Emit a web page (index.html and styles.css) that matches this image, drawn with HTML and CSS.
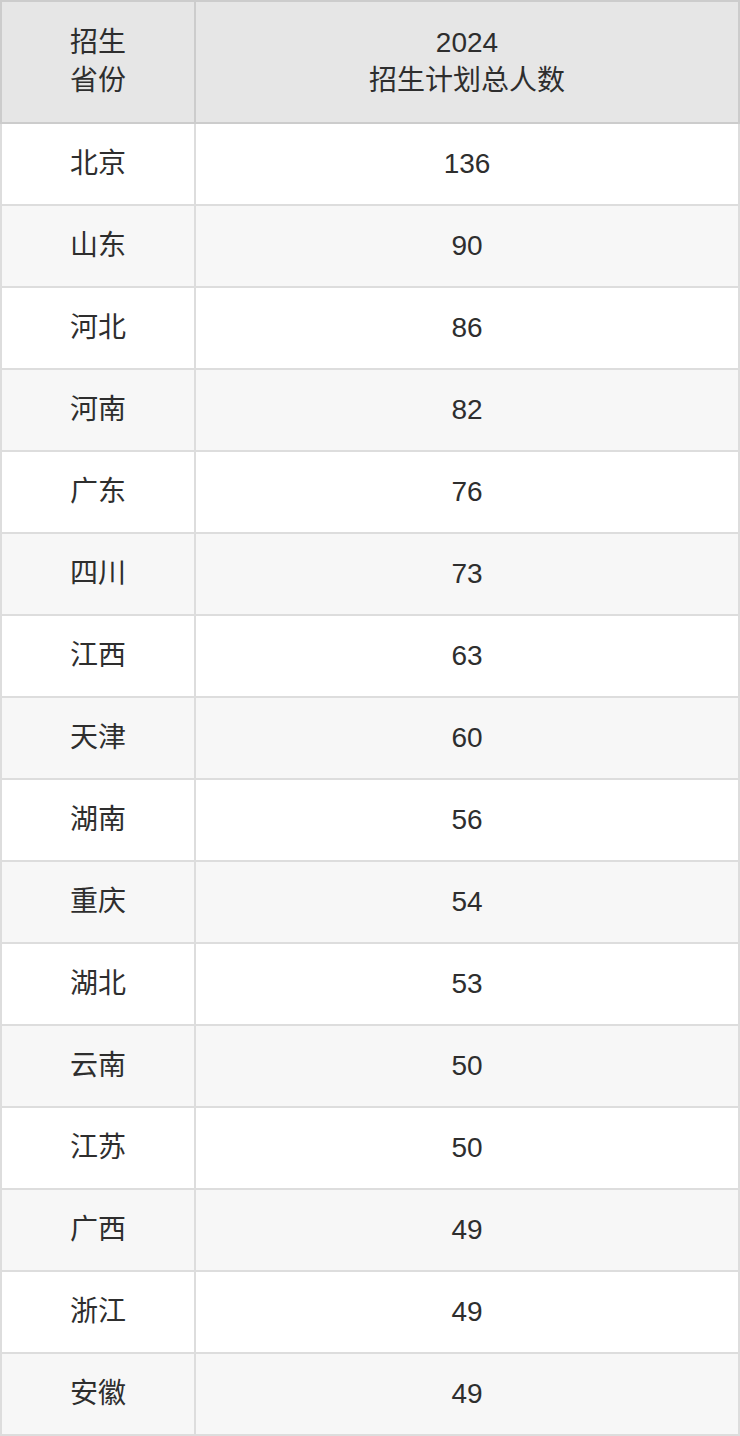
FILE: index.html
```html
<!DOCTYPE html>
<html lang="zh-CN">
<head>
<meta charset="utf-8">
<title>招生计划</title>
<link rel="stylesheet" href="styles.css">
</head>
<body>
<table class="plan">
  <thead>
    <tr><th class="c1">招生<br>省份</th><th class="c2">2024<br>招生计划总人数</th></tr>
  </thead>
  <tbody>
    <tr><td class="c1">北京</td><td class="c2">136</td></tr>
    <tr><td class="c1">山东</td><td class="c2">90</td></tr>
    <tr><td class="c1">河北</td><td class="c2">86</td></tr>
    <tr><td class="c1">河南</td><td class="c2">82</td></tr>
    <tr><td class="c1">广东</td><td class="c2">76</td></tr>
    <tr><td class="c1">四川</td><td class="c2">73</td></tr>
    <tr><td class="c1">江西</td><td class="c2">63</td></tr>
    <tr><td class="c1">天津</td><td class="c2">60</td></tr>
    <tr><td class="c1">湖南</td><td class="c2">56</td></tr>
    <tr><td class="c1">重庆</td><td class="c2">54</td></tr>
    <tr><td class="c1">湖北</td><td class="c2">53</td></tr>
    <tr><td class="c1">云南</td><td class="c2">50</td></tr>
    <tr><td class="c1">江苏</td><td class="c2">50</td></tr>
    <tr><td class="c1">广西</td><td class="c2">49</td></tr>
    <tr><td class="c1">浙江</td><td class="c2">49</td></tr>
    <tr><td class="c1">安徽</td><td class="c2">49</td></tr>
  </tbody>
</table>
</body>
</html>
```

FILE: styles.css
```css
html, body {
  margin: 0;
  padding: 0;
  background: #ffffff;
}
.plan {
  width: 740px;
  table-layout: fixed;
  border-collapse: separate;
  border-spacing: 0;
  font-family: "Liberation Sans", "Noto Sans CJK SC", sans-serif;
  font-size: 28px;
  color: #2e2e2e;
}
.plan th,
.plan td {
  box-sizing: border-box;
  padding: 0;
  text-align: center;
  vertical-align: middle;
  font-weight: normal;
}
.plan th {
  height: 124px;
  line-height: 38px;
  background: #e6e6e6;
  border-top: 2px solid #cccccc;
  border-right: 2px solid #cccccc;
  border-bottom: 2px solid #cccccc;
}
.plan th.c1 {
  border-left: 2px solid #cccccc;
}
.plan td {
  height: 82px;
  line-height: 38px;
  border-right: 2px solid #dddddd;
  border-bottom: 2px solid #dddddd;
}
.plan td.c1 {
  border-left: 2px solid #dddddd;
}
.plan .c1 {
  width: 196px;
}
.plan tbody tr:nth-child(even) td {
  background: #f7f7f7;
}
```
